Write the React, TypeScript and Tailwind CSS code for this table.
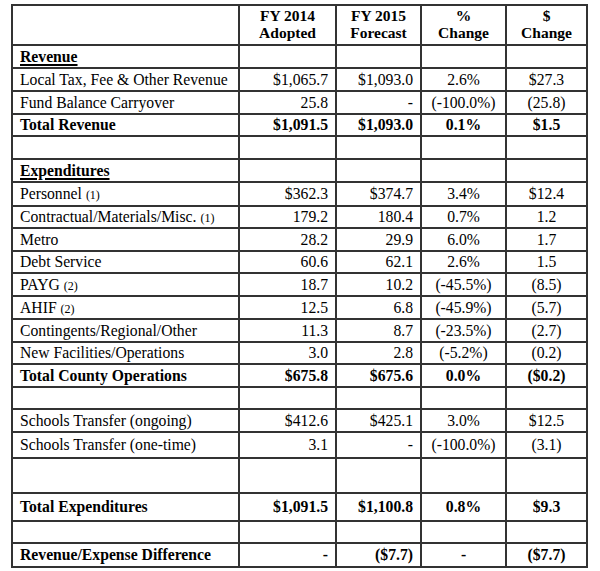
import React from "react";

type Row = {
  h: number;
  label?: string;
  note?: string;
  kind?: "section" | "total" | "normal" | "empty";
  v?: [string, string, string, string];
};

const rows: Row[] = [
  { h: 21, label: "Revenue", kind: "section" },
  { h: 21, label: "Local Tax, Fee & Other Revenue", v: ["$1,065.7", "$1,093.0", "2.6%", "$27.3"] },
  { h: 21, label: "Fund Balance Carryover", v: ["25.8", "-", "(-100.0%)", "(25.8)"] },
  { h: 20, label: "Total Revenue", kind: "total", v: ["$1,091.5", "$1,093.0", "0.1%", "$1.5"] },
  { h: 21, kind: "empty" },
  { h: 21, label: "Expenditures", kind: "section" },
  { h: 22, label: "Personnel", note: "(1)", v: ["$362.3", "$374.7", "3.4%", "$12.4"] },
  { h: 20, label: "Contractual/Materials/Misc.", note: "(1)", v: ["179.2", "180.4", "0.7%", "1.2"] },
  { h: 21, label: "Metro", v: ["28.2", "29.9", "6.0%", "1.7"] },
  { h: 20, label: "Debt Service", v: ["60.6", "62.1", "2.6%", "1.5"] },
  { h: 21, label: "PAYG", note: "(2)", v: ["18.7", "10.2", "(-45.5%)", "(8.5)"] },
  { h: 21, label: "AHIF", note: "(2)", v: ["12.5", "6.8", "(-45.9%)", "(5.7)"] },
  { h: 21, label: "Contingents/Regional/Other", v: ["11.3", "8.7", "(-23.5%)", "(2.7)"] },
  { h: 20, label: "New Facilities/Operations", v: ["3.0", "2.8", "(-5.2%)", "(0.2)"] },
  { h: 21, label: "Total County Operations", kind: "total", v: ["$675.8", "$675.6", "0.0%", "($0.2)"] },
  { h: 20, kind: "empty" },
  { h: 21, label: "Schools Transfer (ongoing)", v: ["$412.6", "$425.1", "3.0%", "$12.5"] },
  { h: 24, label: "Schools Transfer (one-time)", v: ["3.1", "-", "(-100.0%)", "(3.1)"] },
  { h: 33, kind: "empty" },
  { h: 26, label: "Total Expenditures", kind: "total", v: ["$1,091.5", "$1,100.8", "0.8%", "$9.3"] },
  { h: 20, kind: "empty" },
  { h: 22, label: "Revenue/Expense Difference", kind: "total", v: ["-", "($7.7)", "-", "($7.7)"] },
];

export default function App() {
  return (
    <div className="w-[600px] h-[571px] bg-white font-['Liberation_Serif',serif] text-black">
      <div className="pt-[4px] pl-[11px]">
        <div className="w-[577px] bg-[#333] p-[2px] flex flex-col gap-[2px]">
          {/* header */}
          <div className="grid grid-cols-[225px_95px_83px_83px_79px] gap-[2px] h-[38px]">
            <div className="bg-white" />
            {[
              ["FY 2014", "Adopted"],
              ["FY 2015", "Forecast"],
              ["%", "Change"],
              ["$", "Change"],
            ].map(([a, b], i) => (
              <div
                key={i}
                className="bg-white flex flex-col items-center justify-start pt-[1px] font-bold text-[15.5px] leading-[17px]"
              >
                <span>{a}</span>
                <span>{b}</span>
              </div>
            ))}
          </div>
          {rows.map((r, i) => {
            const bold = r.kind === "total";
            return (
              <div
                key={i}
                className={`grid grid-cols-[225px_95px_83px_83px_79px] gap-[2px] text-[15.7px] leading-none ${bold ? "font-bold" : ""}`}
                style={{ height: r.h }}
              >
                <div className="bg-white flex items-center pl-[7px] whitespace-nowrap">
                  {r.kind === "section" ? (
                    <span className="font-bold underline decoration-[1.5px] underline-offset-[2px]">{r.label}</span>
                  ) : (
                    <span>
                      {r.label}
                      {r.note && <span className="text-[12px] ml-[4px]">{r.note}</span>}
                    </span>
                  )}
                </div>
                <div className="bg-white flex items-center justify-end pr-[7px]">{r.v?.[0]}</div>
                <div className="bg-white flex items-center justify-end pr-[7px]">{r.v?.[1]}</div>
                <div className="bg-white flex items-center justify-center">{r.v?.[2]}</div>
                <div className="bg-white flex items-center justify-center">{r.v?.[3]}</div>
              </div>
            );
          })}
        </div>
      </div>
    </div>
  );
}
